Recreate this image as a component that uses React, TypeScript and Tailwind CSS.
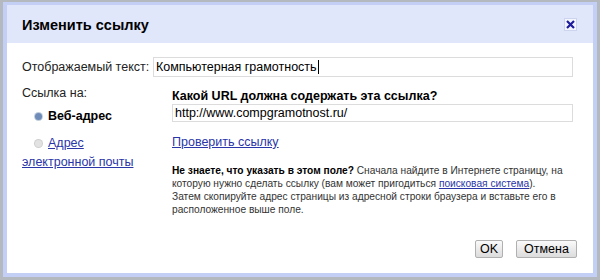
export default function App() {
  return (
    <div
      className="h-[280px] w-[600px] overflow-hidden bg-[#b4b9c0] pl-[3px] pt-[2px] text-[#222]"
      style={{ fontFamily: '"Liberation Sans", Arial, sans-serif' }}
    >
      <div className="flex h-[275px] w-[594px] flex-col border-x-4 border-t-[3px] border-b-4 border-[#c3cff5] bg-white">
        {/* title bar */}
        <div className="flex h-[38px] shrink-0 items-center justify-between bg-[#e1e7fb] pl-[15px] pr-[16px]">
          <span className="mt-[3px] text-[14.5px] font-bold text-black">Изменить ссылку</span>
          <button className="flex h-[13px] w-[13px] items-center justify-center border border-[#cdd4ee] bg-[#f4f6fd]">
            <svg width="9" height="9" viewBox="0 0 9 9">
              <path d="M1 1L8 8M8 1L1 8" stroke="#1c1c9c" strokeWidth="2.2" />
            </svg>
          </button>
        </div>

        {/* body */}
        <div className="flex flex-1 flex-col pl-[15px] pr-[16px] pt-[14px] text-[12.5px]">
          <div className="flex items-center pr-[4px]">
            <span className="w-[131px] whitespace-nowrap">Отображаемый текст:</span>
            <div className="flex h-[20px] flex-1 items-center border border-[#dcdcdc] pl-[2px] text-black">
              Компьютерная грамотность<span className="ml-px h-[14px] w-px bg-black" />
            </div>
          </div>

          <div className="mt-[8px] flex pr-[4px]">
            <div className="w-[150px] shrink-0">
              <div className="leading-[16px]">Ссылка на:</div>
              <div className="mt-[7px] flex h-[16px] items-center pl-[13px]">
                <span className="mr-[6px] h-[7px] w-[7px] rounded-full bg-[#6f8cb8] ring-1 ring-[#c2cede]" />
                <span className="text-[12.5px] font-bold text-black">Веб-адрес</span>
              </div>
              <div className="mt-[11px] flex h-[16px] items-center pl-[13px]">
                <span className="mr-[6px] h-[7px] w-[7px] rounded-full bg-[#e2e2e2] ring-1 ring-[#cfcfcf]" />
                <a className="text-[#2a35a8] underline">Адрес</a>
              </div>
              <a className="mt-[3px] block whitespace-nowrap leading-[16px] text-[#2a35a8] underline">
                электронной почты
              </a>
            </div>

            <div className="flex-1 pt-[4px]">
              <div className="text-[12.5px] font-bold leading-[15px] text-black">
                Какой URL должна содержать эта ссылка?
              </div>
              <div className="flex h-[18px] items-center border border-[#dcdcdc] pl-[2px] text-black">
                http://www.compgramotnost.ru/
              </div>
              <a className="mt-[13px] block leading-[15px] text-[#2a35a8] underline">Проверить ссылку</a>
              <div className="mt-[14px] whitespace-nowrap text-[10.2px] leading-[13px] text-[#333]">
                <b className="text-black">Не знаете, что указать в этом поле?</b> Сначала найдите в
                Интернете страницу, на
                <br />
                которую нужно сделать ссылку (вам может пригодиться{" "}
                <a className="text-[#2a35a8] underline">поисковая система</a>).
                <br />
                Затем скопируйте адрес страницы из адресной строки браузера и вставьте его в
                <br />
                расположенное выше поле.
              </div>
            </div>
          </div>

          <div className="mt-auto mb-[15px] flex justify-end gap-[13px]">
            <button className="h-[18px] w-[28px] rounded-[2px] border border-[#b0b0b0] bg-gradient-to-b from-[#fafafa] to-[#dcdcdc] text-[12.5px] leading-[16px] text-black">
              OK
            </button>
            <button className="h-[18px] w-[61px] rounded-[2px] border border-[#b0b0b0] bg-gradient-to-b from-[#fafafa] to-[#dcdcdc] text-[12.5px] leading-[16px] text-black">
              Отмена
            </button>
          </div>
        </div>
      </div>
    </div>
  );
}
